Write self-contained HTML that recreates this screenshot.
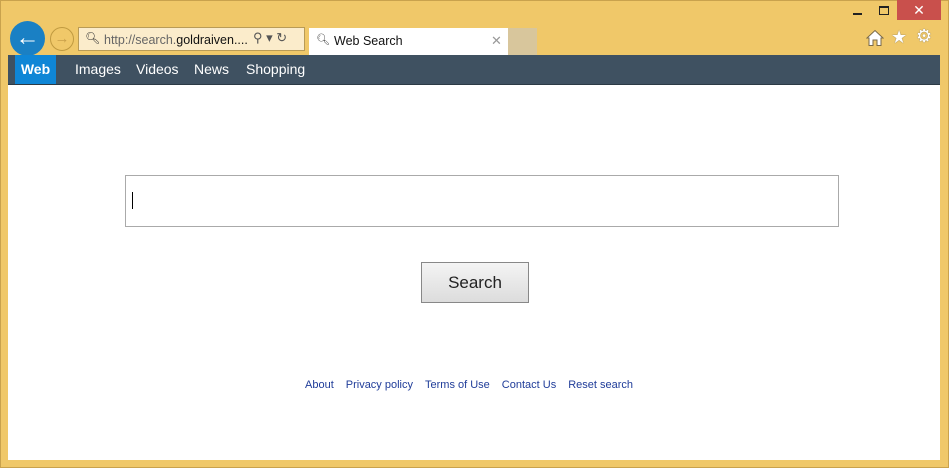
<!DOCTYPE html>
<html><head><meta charset="utf-8"><style>
*{margin:0;padding:0;box-sizing:border-box}
body{width:949px;height:468px;background:#f0c869;position:relative;overflow:hidden;font-family:"Liberation Sans",Arial,sans-serif}
.a{position:absolute}
.nav span{position:absolute;top:0;height:29px;line-height:29px;color:#fff;font-size:14px}
.ft a{color:#1f3c99;text-decoration:none;font-size:11px;margin-right:12px}
</style></head><body>
<div class="a" style="left:0;top:0;width:949px;height:468px;border:1px solid #c9a24d"></div>
<div class="a" style="left:897px;top:0;width:44px;height:20px;background:#c9504c;color:#fff;text-align:center;font-size:14px;line-height:20px">✕</div>
<div class="a" style="left:853px;top:13px;width:9px;height:2px;background:#222"></div>
<div class="a" style="left:879px;top:6px;width:10px;height:9px;border:1px solid #222;border-top-width:2px"></div>
<svg class="a" style="left:866px;top:29px" width="18" height="18" viewBox="0 0 18 18"><path d="M1 9 L9 1.5 L17 9 L15 9 L15 16.5 L11 16.5 L11 11 L7 11 L7 16.5 L3 16.5 L3 9 Z" fill="#fff" stroke="#7a6a4a" stroke-width="1"/></svg>
<div class="a" style="left:891px;top:27px;color:#fff;font-size:18px;text-shadow:0 0 1px #555">★</div>
<div class="a" style="left:916px;top:26px;color:#fff;font-size:18px;text-shadow:0 0 1px #555">⚙</div>
<div class="a" style="left:10px;top:21px;width:35px;height:35px;border-radius:50%;background:#1a80c4;color:#fff;font-size:24px;line-height:33px;text-align:center;font-weight:bold">←</div>
<div class="a" style="left:50px;top:27px;width:24px;height:24px;border-radius:50%;border:1px solid #c09a40;color:#c9a04a;font-size:15px;line-height:22px;text-align:center">→</div>
<div class="a" style="left:78px;top:27px;width:227px;height:24px;background:#fbeccb;border:1px solid #b99b56"></div>
<div class="a" style="left:85px;top:31px;font-size:12px;color:#333">🔍︎</div>
<div class="a" style="left:104px;top:33px;font-size:12.5px;color:#666">http://search.<span style="color:#111">goldraiven....</span></div>
<div class="a" style="left:253px;top:30px;font-size:13px;color:#555">⚲ ▾ ↻</div>
<div class="a" style="left:309px;top:28px;width:199px;height:27px;background:#fff"></div>
<div class="a" style="left:316px;top:33px;font-size:11px;color:#444">🔍︎</div>
<div class="a" style="left:334px;top:34px;font-size:12.5px;color:#111">Web Search</div>
<div class="a" style="left:491px;top:33px;font-size:13px;color:#999">✕</div>
<div class="a" style="left:508px;top:28px;width:29px;height:27px;background:#d8c69c"></div>
<div class="a" style="left:8px;top:55px;width:932px;height:405px;background:#fff"></div>
<div class="a nav" style="left:8px;top:55px;width:932px;height:30px;background:#3f5161;border-bottom:1px solid #2c3a45">
<span style="left:7px;width:41px;background:#0f86d6;text-align:center;font-weight:bold">Web</span>
<span style="left:67px">Images</span><span style="left:128px">Videos</span><span style="left:186px">News</span><span style="left:238px">Shopping</span>
</div>
<div class="a" style="left:125px;top:175px;width:714px;height:52px;border:1px solid #aaa"></div>
<div class="a" style="left:132px;top:192px;width:1px;height:17px;background:#000"></div>
<div class="a" style="left:421px;top:262px;width:108px;height:41px;border:1px solid #888;background:linear-gradient(#f4f4f4,#dcdcdc);font-size:17px;color:#222;text-align:center;line-height:39px">Search</div>
<div class="a ft" style="left:305px;top:375px;white-space:nowrap"><a>About</a><a>Privacy policy</a><a>Terms of Use</a><a>Contact Us</a><a>Reset search</a></div>
</body></html>
